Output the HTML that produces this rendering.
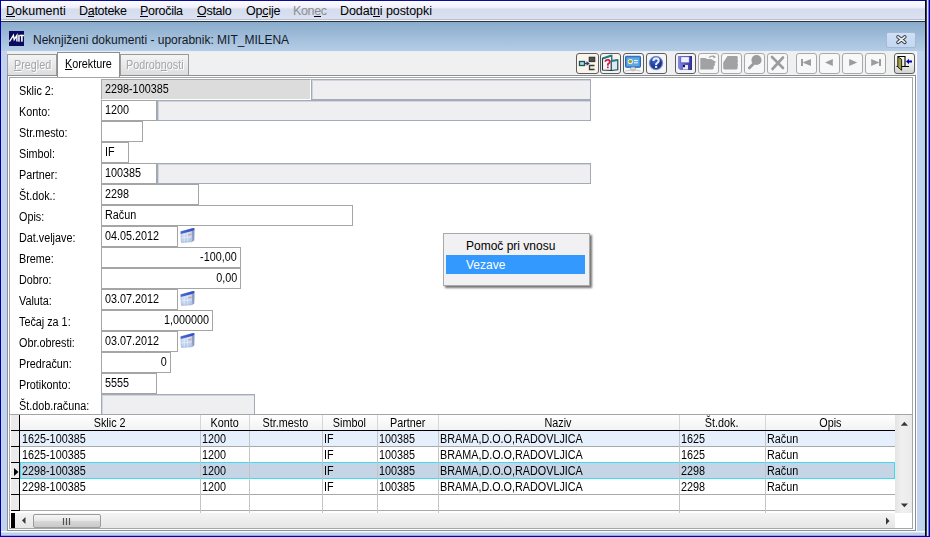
<!DOCTYPE html>
<html><head><meta charset="utf-8">
<style>
*{box-sizing:border-box;margin:0;padding:0}
html,body{width:930px;height:537px;overflow:hidden;background:#f0f0f0;font-family:"Liberation Sans",sans-serif;color:#000}
.a{position:absolute}
.mi{position:absolute;top:4px;font-size:12.5px;color:#000;white-space:nowrap}
.mi u{text-decoration:none;background:linear-gradient(#000,#000) no-repeat 0 12px/100% 1px}
.lbl{position:absolute;left:19px;font-size:12px;white-space:nowrap;line-height:13px;transform:scaleX(.9);transform-origin:0 0}
.box{position:absolute;border:1px solid #a5a5a5;background:#fff;font-size:12px;line-height:13px;padding:3px 0 0 3px;white-space:nowrap;overflow:hidden}
.bt{display:inline-block;transform:scaleX(.9);transform-origin:0 0}
.r .bt{transform-origin:100% 0}
.gbox{position:absolute;border:1px solid #a3abb9;background:#efeff2;box-shadow:inset 1px 1px 0 #cfd5de}
.r{text-align:right;padding:3px 3px 0 0}
.btn{position:absolute;top:53px;width:21px;height:21px;border:1px solid #5e5e5e;border-radius:3px;background:#f7f4ef}
.btn.d{border-color:#a9a9a9;background:#f8f8f8}
.cal{position:absolute;width:15px;height:16px}
.gh{position:absolute;top:416px;height:14px;font-size:12px;line-height:14px;text-align:center;white-space:nowrap}
.gh span{display:inline-block;transform:scaleX(.9);transform-origin:50% 0}
.tt{font-size:12px;line-height:13px;white-space:nowrap;transform:scaleX(.9);transform-origin:0 0}
.gc{position:absolute;font-size:12px;line-height:14px;white-space:nowrap;transform:scaleX(.9);transform-origin:0 0}
</style></head><body>

<!-- outer frame -->
<div class="a" style="left:0;top:0;width:930px;height:1px;background:#0a0a9c"></div>
<div class="a" style="left:0;top:0;width:1px;height:537px;background:#0000a0"></div>
<div class="a" style="left:925px;top:0;width:1px;height:537px;background:#000818"></div>
<div class="a" style="left:926px;top:0;width:1px;height:537px;background:#38404c"></div>
<div class="a" style="left:927px;top:0;width:1px;height:537px;background:#e2e2ff"></div>
<div class="a" style="left:928px;top:0;width:1px;height:537px;background:#7878ee"></div>
<div class="a" style="left:929px;top:0;width:1px;height:537px;background:#0000a8"></div>
<div class="a" style="left:0;top:536px;width:930px;height:1px;background:#0000c0"></div>

<!-- menu bar -->
<div class="a" style="left:1px;top:1px;width:924px;height:18px;background:linear-gradient(#fbfdfd 0,#f1f1fb 35%,#d7ddef 45%,#d5dfee 70%,#dde1f4 100%)"></div>
<div class="a" style="left:1px;top:19px;width:924px;height:1px;background:#bcc0ca"></div>
<div class="a" style="left:1px;top:20px;width:924px;height:1px;background:#f4f8fc"></div>
<div class="a" style="left:1px;top:21px;width:924px;height:1px;background:#283440"></div>
<div class="mi" style="left:6px"><u>D</u>okumenti</div>
<div class="mi" style="left:79px;letter-spacing:-0.3px">D<u>a</u>toteke</div>
<div class="mi" style="left:140px;letter-spacing:-0.3px"><u>P</u>oročila</div>
<div class="mi" style="left:197px;letter-spacing:-0.28px"><u>O</u>stalo</div>
<div class="mi" style="left:246px;letter-spacing:-0.18px">Op<u>c</u>ije</div>
<div class="mi" style="left:293px;color:#8d8d8d;letter-spacing:-0.34px">Kon<u style="border-color:#8d8d8d">e</u>c</div>
<div class="mi" style="left:340px;letter-spacing:-0.08px">Dodat<u>n</u>i postopki</div>

<!-- title bar -->
<div class="a" style="left:1px;top:22px;width:924px;height:29px;background:linear-gradient(#8aaccc,#b5cde6)"></div>
<div class="a" style="left:7px;top:51px;width:911px;height:1px;background:#e6eef8"></div>
<svg class="a" style="left:9px;top:31px" width="15" height="15" viewBox="0 0 15 15"><rect width="15" height="15" fill="#0a0a5e"/>
<path d="M0.4 10.6 L4.4 4.4 L5.2 8.6 L7.9 4.4 V10.6" fill="none" stroke="#fff" stroke-width="1.4" stroke-linejoin="miter"/>
<rect x="9.2" y="3.8" width="1.5" height="6.9" fill="#fff"/><rect x="10.7" y="3.8" width="4.3" height="1.4" fill="#fff"/><rect x="12.1" y="3.8" width="1.6" height="6.9" fill="#fff"/></svg>
<div class="a" style="left:33px;top:33px;font-size:12px;color:#121a28;white-space:nowrap">Neknjiženi dokumenti - uporabnik: MIT_MILENA</div>
<div class="a" style="left:886px;top:32px;width:30px;height:16px;background:linear-gradient(#cfe0f6,#c2d8f2);border:1px solid #a6b8d2;border-radius:2px"></div>
<svg class="a" style="left:894.5px;top:34px" width="13" height="11" viewBox="0 0 13 11"><path d="M3 2.8 L9.8 8.3 M9.8 2.8 L3 8.3" stroke="#353c48" stroke-width="3.6" stroke-linecap="round"/><path d="M3 2.8 L9.8 8.3 M9.8 2.8 L3 8.3" stroke="#f2f2f2" stroke-width="1.7" stroke-linecap="round"/></svg>

<!-- side frames -->
<div class="a" style="left:1px;top:51px;width:6px;height:484px;background:#c2d3ef"></div>
<div class="a" style="left:917px;top:51px;width:8px;height:484px;background:linear-gradient(90deg,#c4d4f0 0,#c4d4f0 70%,#a8d6e8 100%)"></div>
<div class="a" style="left:916px;top:52px;width:1px;height:479px;background:#fafcfe"></div>
<div class="a" style="left:1px;top:531px;width:924px;height:5px;background:linear-gradient(#f6fbfc 0,#f6fbfc 20%,#b9d1e4 40%,#b9d1e4 60%,#c6d4f4 80%,#7070e0 100%)"></div>

<!-- tabs -->
<div class="a" style="left:7px;top:54px;width:50px;height:22px;border:1px solid #9a9a9a;border-bottom:none;background:linear-gradient(#f4f4f4,#dcdcdc)"></div>
<div class="a tt" style="left:14px;top:59px;color:#a6a6a6;text-shadow:1px 1px 0 #fff"><span style="text-decoration:underline">P</span>regled</div>
<div class="a" style="left:120px;top:54px;width:69px;height:22px;border:1px solid #9a9a9a;border-bottom:none;background:linear-gradient(#f4f4f4,#dcdcdc)"></div>
<div class="a tt" style="left:126px;top:59px;color:#a6a6a6;text-shadow:1px 1px 0 #fff">Podrob<span style="text-decoration:underline">n</span>osti</div>

<!-- panel -->
<div class="a" style="left:7px;top:75px;width:909px;height:456px;border:1px solid #8a8e96;background:#fff"></div>
<div class="a" style="left:9px;top:77px;width:904px;height:452px;border:1px solid #a2a6a4"></div>
<div class="a" style="left:57px;top:52px;width:63px;height:25px;border:1px solid #8e8e8e;border-bottom:none;background:#fff"></div>
<div class="a tt" style="left:65px;top:58px"><span style="text-decoration:underline">K</span>orekture</div>

<!-- toolbar -->
<div class="btn" style="left:576px;width:23px;background:#faf4ec"></div>
<svg class="a" style="left:576px;top:53px" width="23" height="20" viewBox="0 0 23 20">
<rect x="3.5" y="8.5" width="5" height="4" fill="#9ee6e6" stroke="#1f5056" stroke-width="1.3"/>
<path d="M8.5 10.5 H12" stroke="#3c3c6c" stroke-width="1.3"/><path d="M10.5 8.3 L13.8 10.5 L10.5 12.7 Z" fill="#3c3c6c"/>
<rect x="13.3" y="4.3" width="5.4" height="4.2" fill="#4a5245" stroke="#343a34" stroke-width="1.2"/>
<path d="M18.5 12.5 H13.5 V16.5 H18.5" fill="#f2ede2" stroke="#343a34" stroke-width="1.3"/>
</svg>
<div class="btn" style="left:600px"></div>
<svg class="a" style="left:600px;top:53px" width="21" height="20" viewBox="0 0 21 20"><path d="M2.5 5.5 L11.8 2.5 L11.8 17.5 L2.5 17 Z" fill="#f8f4f8" stroke="#133848" stroke-width="1.1"/>
<path d="M2.5 5.5 L11.8 2.5" stroke="#1f8088" stroke-width="2"/>
<path d="M11.2 8 L17.8 7 L17.8 16.8 L11.2 17.5 Z" fill="#dce8f2" stroke="#133848" stroke-width="1.1"/>
<path d="M11.2 8 L17.8 7" stroke="#1f8088" stroke-width="1.8"/>
<path d="M5 8.6 Q6 6.6 8.3 6.9 Q10.4 7.4 9.6 9.4 Q9 10.5 8 11 L7.8 12.6" fill="none" stroke="#d41a3a" stroke-width="1.8"/>
<rect x="7" y="13.5" width="1.7" height="1.7" fill="#d41a3a"/></svg>
<div class="btn" style="left:623px;background:#f4f6f8"></div>
<svg class="a" style="left:623px;top:53px" width="21" height="20" viewBox="0 0 21 20"><rect x="2.5" y="3.3" width="15" height="11" rx="0.8" fill="#3f8fd6" stroke="#2a64b0" stroke-width="1"/>
<rect x="3.8" y="4.6" width="12.4" height="8.4" fill="#5aaae8"/>
<circle cx="7.3" cy="8.5" r="2.6" fill="#f4f6f8"/><circle cx="7.3" cy="8.5" r="1.8" fill="#a8a020"/>
<rect x="11" y="7" width="3.8" height="1.1" fill="#f0f6fc"/><rect x="11" y="9.2" width="3.8" height="1.1" fill="#f0f6fc"/>
<ellipse cx="10" cy="16" rx="2.6" ry="1.9" fill="#e4e0dc" stroke="#b0a8a0" stroke-width="0.7"/>
<path d="M2.5 18 Q10 15 17.5 18" fill="none" stroke="#c0c0c0" stroke-width="0.9"/></svg>
<div class="btn" style="left:646px;background:#f6f6f8"></div>
<svg class="a" style="left:646px;top:53px" width="21" height="20" viewBox="0 0 21 20"><defs><radialGradient id="hg" cx="0.4" cy="0.35" r="0.7"><stop offset="0" stop-color="#3a64c8"/><stop offset="1" stop-color="#0f2478"/></radialGradient></defs>
<circle cx="10" cy="10" r="7.3" fill="#b4c2e4"/>
<circle cx="10" cy="10" r="6.4" fill="url(#hg)" stroke="#6d88cc" stroke-width="1"/>
<path d="M7.4 8 Q7.4 5.4 10 5.4 Q12.7 5.4 12.7 7.8 Q12.7 9.2 11 10.1 Q10.1 10.6 10.1 12" fill="none" stroke="#e8eeff" stroke-width="2.1"/>
<rect x="9" y="12.9" width="2.2" height="2" fill="#e8eeff"/></svg>
<div class="btn" style="left:675px;background:#f4f4f8"></div>
<svg class="a" style="left:675px;top:53px" width="21" height="20" viewBox="0 0 21 20">
<defs><linearGradient id="fl" x1="0" x2="1"><stop offset="0" stop-color="#8a8ae6"/><stop offset="1" stop-color="#2c2c92"/></linearGradient></defs>
<path d="M3 3 H17 V17 H5 L3 15 Z" fill="url(#fl)"/>
<rect x="5.8" y="3.8" width="8.4" height="6" fill="#f0f0fa" stroke="#4a4ab8" stroke-width="0.6"/>
<rect x="8" y="12" width="5" height="4.5" fill="#e8ecf8"/><rect x="8" y="12" width="2" height="2.2" fill="#10105a"/>
</svg>
<div class="btn d" style="left:698px"></div>
<svg class="a" style="left:698px;top:53px" width="21" height="20" viewBox="0 0 21 20">
<path d="M2.3 5 H7.5 L9 6 H13 L16.5 8 L18 9 L16.5 10.5 L17 12 L15.5 13.5 L16 15 L14.5 16.5 H2.3 Z" fill="#a2a2a2"/>
<path d="M11 4.5 Q13.5 2.2 16.5 3.6" fill="none" stroke="#a2a2a2" stroke-width="1.3"/><path d="M15.2 2.2 L18 4 L15.5 5.5 Z" fill="#a2a2a2"/>
</svg>
<div class="btn d" style="left:721px"></div>
<svg class="a" style="left:721px;top:53px" width="21" height="20" viewBox="0 0 21 20">
<path d="M6.5 3 H16 Q17.5 4 16.5 6 Q17.5 8 16.5 10 Q17.5 12 16.5 14 Q17 16.5 15 16.5 H3.5 Q2.2 16.5 2.2 14.5 V9.5 Z" fill="#a2a2a2"/>
</svg>
<div class="btn d" style="left:744px"></div>
<svg class="a" style="left:744px;top:53px" width="21" height="20" viewBox="0 0 21 20"><circle cx="12.5" cy="7" r="5.1" fill="#9c9c9c"/><path d="M5.3 15 L10 10.3" stroke="#9c9c9c" stroke-width="2.8" stroke-linecap="round"/></svg>
<div class="btn d" style="left:767px"></div>
<svg class="a" style="left:767px;top:53px" width="21" height="20" viewBox="0 0 21 20"><path d="M5 4 L16 15 M16 4.5 L5.5 16" stroke="#9c9c9c" stroke-width="2.6" stroke-linecap="round"/></svg>
<div class="btn d" style="left:796px"></div>
<svg class="a" style="left:796px;top:53px" width="21" height="20" viewBox="0 0 21 20"><rect x="5" y="6" width="2" height="7" fill="#9c9c9c"/><path d="M6.5 9.5 L15 6 V13 Z" fill="#9c9c9c"/></svg>
<div class="btn d" style="left:819px"></div>
<svg class="a" style="left:819px;top:53px" width="21" height="20" viewBox="0 0 21 20"><path d="M6 9.5 L13.8 6 V13 Z" fill="#9c9c9c"/></svg>
<div class="btn d" style="left:842px"></div>
<svg class="a" style="left:842px;top:53px" width="21" height="20" viewBox="0 0 21 20"><path d="M15.2 9.5 L7.2 6 V13 Z" fill="#9c9c9c"/></svg>
<div class="btn d" style="left:865px"></div>
<svg class="a" style="left:865px;top:53px" width="21" height="20" viewBox="0 0 21 20"><path d="M14.5 9.5 L6.2 6 V13 Z" fill="#9c9c9c"/><rect x="14" y="6" width="2" height="7" fill="#9c9c9c"/></svg>
<div class="btn" style="left:894px;background:linear-gradient(#fbfbf4 0,#f0f0ea 50%,#d2d2d2 100%);border-color:#5e5e5e"></div>
<svg class="a" style="left:894px;top:53px" width="21" height="20" viewBox="0 0 21 20">
<path d="M3.5 3.5 H11 V13.5 M2.5 13.5 H15" fill="none" stroke="#000" stroke-width="1.1"/>
<path d="M3.8 3.8 L7.6 6.3 V17.3 L3.8 14 Z" fill="#a3a040" stroke="#101008" stroke-width="0.9"/>
<path d="M12 8.5 L15 5.8 V7.5 H18 V9.5 H15 V11.2 Z" fill="#0000b0"/>
</svg>

<!-- form labels -->
<div class="lbl" style="top:85px">Sklic 2:</div>
<div class="lbl" style="top:106px">Konto:</div>
<div class="lbl" style="top:127px">Str.mesto:</div>
<div class="lbl" style="top:148px">Simbol:</div>
<div class="lbl" style="top:169px">Partner:</div>
<div class="lbl" style="top:190px">Št.dok.:</div>
<div class="lbl" style="top:211px">Opis:</div>
<div class="lbl" style="top:232px">Dat.veljave:</div>
<div class="lbl" style="top:253px">Breme:</div>
<div class="lbl" style="top:274px">Dobro:</div>
<div class="lbl" style="top:295px">Valuta:</div>
<div class="lbl" style="top:316px">Tečaj za 1:</div>
<div class="lbl" style="top:337px">Obr.obresti:</div>
<div class="lbl" style="top:358px">Predračun:</div>
<div class="lbl" style="top:379px">Protikonto:</div>
<div class="lbl" style="top:400px">Št.dob.računa:</div>

<!-- form fields -->
<div class="box" style="left:101px;top:79px;width:210px;height:21px;background:#dcdcdc;border-color:#a8a8a8 #fff #fff #a8a8a8"><span class="bt">2298-100385</span></div>
<div class="gbox" style="left:311px;top:79px;width:280px;height:21px"></div>
<div class="box" style="left:101px;top:100px;width:56px;height:21px"><span class="bt">1200</span></div>
<div class="gbox" style="left:157px;top:100px;width:434px;height:21px"></div>
<div class="box" style="left:101px;top:121px;width:42px;height:21px"></div>
<div class="box" style="left:101px;top:142px;width:28px;height:21px"><span class="bt">IF</span></div>
<div class="box" style="left:101px;top:163px;width:56px;height:21px"><span class="bt">100385</span></div>
<div class="gbox" style="left:157px;top:163px;width:434px;height:21px"></div>
<div class="box" style="left:101px;top:184px;width:98px;height:21px"><span class="bt">2298</span></div>
<div class="box" style="left:101px;top:205px;width:252px;height:21px"><span class="bt">Račun</span></div>
<div class="box" style="left:101px;top:226px;width:77px;height:21px"><span class="bt">04.05.2012</span></div>
<div class="box r" style="left:101px;top:247px;width:140px;height:21px"><span class="bt">-100,00</span></div>
<div class="box r" style="left:101px;top:268px;width:140px;height:21px"><span class="bt">0,00</span></div>
<div class="box" style="left:101px;top:289px;width:77px;height:21px"><span class="bt">03.07.2012</span></div>
<div class="box r" style="left:101px;top:310px;width:112px;height:21px"><span class="bt">1,000000</span></div>
<div class="box" style="left:101px;top:331px;width:77px;height:21px"><span class="bt">03.07.2012</span></div>
<div class="box r" style="left:101px;top:352px;width:70px;height:21px"><span class="bt">0</span></div>
<div class="box" style="left:101px;top:373px;width:56px;height:21px"><span class="bt">5555</span></div>
<div class="gbox" style="left:101px;top:394px;width:154px;height:21px"></div>


<svg class="a" style="left:179px;top:227px" width="17" height="17" viewBox="0 0 17 17">
<defs><linearGradient id="cb0" x1="0" y1="0" x2="0.3" y2="1"><stop offset="0" stop-color="#e6f0fc"/><stop offset="1" stop-color="#b6cbec"/></linearGradient>
<linearGradient id="bb0" x1="0" y1="0" x2="1" y2="0"><stop offset="0" stop-color="#4a66d0"/><stop offset="1" stop-color="#2c4cc4"/></linearGradient></defs>
<path d="M12.8 2 L15.2 1.2 Q15.8 1.4 15.6 3 L15.3 13.4 L13.2 14.8 Z" fill="#8a9ac0"/>
<path d="M1.7 4.6 L13 1.5 L13.2 14.8 L2.4 15.4 Z" fill="url(#cb0)" stroke="#8e9ec4" stroke-width="0.5"/>
<path d="M1.7 4.6 L12.6 1.4 Q14.6 0.8 15.4 1.4 L15.3 2.6 L13.1 4 L1.8 7 Z" fill="url(#bb0)"/>
<path d="M9 7.2 L12.3 6.4 L12.3 7.8 L9 8.6 Z" fill="#e8968e"/>
<path d="M5.3 7 V15 M8.7 6.2 V15 M2 11 L13 10" stroke="#ffffff" stroke-width="0.5" opacity="0.8"/>
</svg>
<svg class="a" style="left:179px;top:290px" width="17" height="17" viewBox="0 0 17 17">
<defs><linearGradient id="cb1" x1="0" y1="0" x2="0.3" y2="1"><stop offset="0" stop-color="#e6f0fc"/><stop offset="1" stop-color="#b6cbec"/></linearGradient>
<linearGradient id="bb1" x1="0" y1="0" x2="1" y2="0"><stop offset="0" stop-color="#4a66d0"/><stop offset="1" stop-color="#2c4cc4"/></linearGradient></defs>
<path d="M12.8 2 L15.2 1.2 Q15.8 1.4 15.6 3 L15.3 13.4 L13.2 14.8 Z" fill="#8a9ac0"/>
<path d="M1.7 4.6 L13 1.5 L13.2 14.8 L2.4 15.4 Z" fill="url(#cb1)" stroke="#8e9ec4" stroke-width="0.5"/>
<path d="M1.7 4.6 L12.6 1.4 Q14.6 0.8 15.4 1.4 L15.3 2.6 L13.1 4 L1.8 7 Z" fill="url(#bb1)"/>
<path d="M9 7.2 L12.3 6.4 L12.3 7.8 L9 8.6 Z" fill="#e8968e"/>
<path d="M5.3 7 V15 M8.7 6.2 V15 M2 11 L13 10" stroke="#ffffff" stroke-width="0.5" opacity="0.8"/>
</svg>
<svg class="a" style="left:179px;top:332px" width="17" height="17" viewBox="0 0 17 17">
<defs><linearGradient id="cb2" x1="0" y1="0" x2="0.3" y2="1"><stop offset="0" stop-color="#e6f0fc"/><stop offset="1" stop-color="#b6cbec"/></linearGradient>
<linearGradient id="bb2" x1="0" y1="0" x2="1" y2="0"><stop offset="0" stop-color="#4a66d0"/><stop offset="1" stop-color="#2c4cc4"/></linearGradient></defs>
<path d="M12.8 2 L15.2 1.2 Q15.8 1.4 15.6 3 L15.3 13.4 L13.2 14.8 Z" fill="#8a9ac0"/>
<path d="M1.7 4.6 L13 1.5 L13.2 14.8 L2.4 15.4 Z" fill="url(#cb2)" stroke="#8e9ec4" stroke-width="0.5"/>
<path d="M1.7 4.6 L12.6 1.4 Q14.6 0.8 15.4 1.4 L15.3 2.6 L13.1 4 L1.8 7 Z" fill="url(#bb2)"/>
<path d="M9 7.2 L12.3 6.4 L12.3 7.8 L9 8.6 Z" fill="#e8968e"/>
<path d="M5.3 7 V15 M8.7 6.2 V15 M2 11 L13 10" stroke="#ffffff" stroke-width="0.5" opacity="0.8"/>
</svg>

<!-- context menu -->
<div class="a" style="left:443px;top:233px;width:147px;height:53px;background:#f1f1f3;border:1px solid #a9a9a9;box-shadow:2px 2px 2px rgba(0,0,0,0.55)"></div>
<div class="a" style="left:446px;top:255px;width:139px;height:19px;background:#3399ff"></div>
<div class="a" style="left:466px;top:239px;font-size:12px;white-space:nowrap">Pomoč pri vnosu</div>
<div class="a" style="left:466px;top:258px;font-size:12px;color:#fff;white-space:nowrap">Vezave</div>

<!-- grid -->
<div class="a" style="left:10px;top:414px;width:903px;height:1px;background:#a0a6ac"></div>
<div class="a" style="left:11px;top:415px;width:8px;height:96px;background:#ebebeb"></div>
<div class="a" style="left:20px;top:415px;width:875px;height:15px;background:linear-gradient(#ffffff,#f2f2f2)"></div>
<div class="a" style="left:11px;top:430px;width:884px;height:1px;background:#000"></div>
<div class="a" style="left:19px;top:415px;width:1px;height:96px;background:#000"></div>
<div class="a" style="left:20px;top:431px;width:875px;height:15px;background:#e6f0fc"></div>
<div class="a" style="left:20px;top:446px;width:875px;height:1px;background:#a9a9a9"></div>
<div class="a" style="left:11px;top:446px;width:8px;height:1px;background:#000"></div>
<div class="a" style="left:20px;top:462px;width:875px;height:1px;background:#a9a9a9"></div>
<div class="a" style="left:11px;top:462px;width:8px;height:1px;background:#000"></div>
<div class="a" style="left:20px;top:478px;width:875px;height:1px;background:#a9a9a9"></div>
<div class="a" style="left:11px;top:478px;width:8px;height:1px;background:#000"></div>
<div class="a" style="left:20px;top:494px;width:875px;height:1px;background:#a9a9a9"></div>
<div class="a" style="left:11px;top:494px;width:8px;height:1px;background:#000"></div>
<div class="a" style="left:20px;top:510px;width:875px;height:1px;background:#a9a9a9"></div>
<div class="a" style="left:11px;top:510px;width:8px;height:1px;background:#000"></div>
<div class="a" style="left:20px;top:462px;width:875px;height:17px;background:#c5d5e6;border:1px solid #3fdcee"></div>
<svg class="a" style="left:13px;top:467px" width="6" height="10" viewBox="0 0 6 10"><path d="M1 1 L5.5 5 L1 9 Z" fill="#000"/></svg>
<div class="a" style="left:200px;top:415px;width:1px;height:15px;background:#d6d6d6"></div>
<div class="a" style="left:200px;top:431px;width:1px;height:82px;background:#c4c4c4"></div>
<div class="a" style="left:249px;top:415px;width:1px;height:15px;background:#d6d6d6"></div>
<div class="a" style="left:249px;top:431px;width:1px;height:82px;background:#c4c4c4"></div>
<div class="a" style="left:322px;top:415px;width:1px;height:15px;background:#d6d6d6"></div>
<div class="a" style="left:322px;top:431px;width:1px;height:82px;background:#c4c4c4"></div>
<div class="a" style="left:377px;top:415px;width:1px;height:15px;background:#d6d6d6"></div>
<div class="a" style="left:377px;top:431px;width:1px;height:82px;background:#c4c4c4"></div>
<div class="a" style="left:438px;top:415px;width:1px;height:15px;background:#d6d6d6"></div>
<div class="a" style="left:438px;top:431px;width:1px;height:82px;background:#c4c4c4"></div>
<div class="a" style="left:679px;top:415px;width:1px;height:15px;background:#d6d6d6"></div>
<div class="a" style="left:679px;top:431px;width:1px;height:82px;background:#c4c4c4"></div>
<div class="a" style="left:765px;top:415px;width:1px;height:15px;background:#d6d6d6"></div>
<div class="a" style="left:765px;top:431px;width:1px;height:82px;background:#c4c4c4"></div>
<div class="gh" style="left:20px;width:180px"><span>Sklic 2</span></div>
<div class="gh" style="left:200px;width:49px"><span>Konto</span></div>
<div class="gh" style="left:249px;width:73px"><span>Str.mesto</span></div>
<div class="gh" style="left:322px;width:55px"><span>Simbol</span></div>
<div class="gh" style="left:377px;width:61px"><span>Partner</span></div>
<div class="gh" style="left:438px;width:241px"><span>Naziv</span></div>
<div class="gh" style="left:679px;width:86px"><span>Št.dok.</span></div>
<div class="gh" style="left:765px;width:130px"><span>Opis</span></div>
<div class="gc" style="left:22px;top:432px">1625-100385</div>
<div class="gc" style="left:202px;top:432px">1200</div>
<div class="gc" style="left:324px;top:432px">IF</div>
<div class="gc" style="left:379px;top:432px">100385</div>
<div class="gc" style="left:440px;top:432px">BRAMA,D.O.O,RADOVLJICA</div>
<div class="gc" style="left:681px;top:432px">1625</div>
<div class="gc" style="left:767px;top:432px">Račun</div>
<div class="gc" style="left:22px;top:448px">1625-100385</div>
<div class="gc" style="left:202px;top:448px">1200</div>
<div class="gc" style="left:324px;top:448px">IF</div>
<div class="gc" style="left:379px;top:448px">100385</div>
<div class="gc" style="left:440px;top:448px">BRAMA,D.O.O,RADOVLJICA</div>
<div class="gc" style="left:681px;top:448px">1625</div>
<div class="gc" style="left:767px;top:448px">Račun</div>
<div class="gc" style="left:22px;top:464px">2298-100385</div>
<div class="gc" style="left:202px;top:464px">1200</div>
<div class="gc" style="left:324px;top:464px">IF</div>
<div class="gc" style="left:379px;top:464px">100385</div>
<div class="gc" style="left:440px;top:464px">BRAMA,D.O.O,RADOVLJICA</div>
<div class="gc" style="left:681px;top:464px">2298</div>
<div class="gc" style="left:767px;top:464px">Račun</div>
<div class="gc" style="left:22px;top:480px">2298-100385</div>
<div class="gc" style="left:202px;top:480px">1200</div>
<div class="gc" style="left:324px;top:480px">IF</div>
<div class="gc" style="left:379px;top:480px">100385</div>
<div class="gc" style="left:440px;top:480px">BRAMA,D.O.O,RADOVLJICA</div>
<div class="gc" style="left:681px;top:480px">2298</div>
<div class="gc" style="left:767px;top:480px">Račun</div>
<div class="a" style="left:895px;top:415px;width:17px;height:98px;background:linear-gradient(90deg,#e4e4e4,#f0f0f0 40%,#eaeaea)"></div>
<svg class="a" style="left:895px;top:415px" width="17" height="98" viewBox="0 0 17 98"><path d="M5.8 10.8 L9.4 6.8 L13 10.8 Z" fill="#383838"/><path d="M5.8 88.5 L9.4 92.3 L13 88.5 Z" fill="#383838"/></svg>
<div class="a" style="left:11px;top:513px;width:884px;height:15px;background:linear-gradient(#f4f4f4,#e6e6e6)"></div>
<div class="a" style="left:11px;top:513px;width:4px;height:15px;background:#000"></div>
<div class="a" style="left:33px;top:514px;width:68px;height:14px;border:1px solid #9c9c9c;border-radius:2px;background:linear-gradient(#f6f6f6,#e8e8e8 45%,#d6d6d6 55%,#c9c9c9)"></div>
<svg class="a" style="left:15px;top:513px" width="18" height="15" viewBox="0 0 18 15"><path d="M10.5 4 L7 7.5 L10.5 11 Z" fill="#383838"/></svg>
<svg class="a" style="left:62px;top:517px" width="10" height="9" viewBox="0 0 10 9"><path d="M1.5 1 V8 M4.5 1 V8 M7.5 1 V8" stroke="#505050" stroke-width="1.2"/></svg>
<svg class="a" style="left:877px;top:513px" width="18" height="15" viewBox="0 0 18 15"><path d="M9 4.3 L12.5 8 L9 11.7 Z" fill="#383838"/></svg>
<div class="a" style="left:895px;top:513px;width:17px;height:15px;background:#fff"></div>


</body></html>
